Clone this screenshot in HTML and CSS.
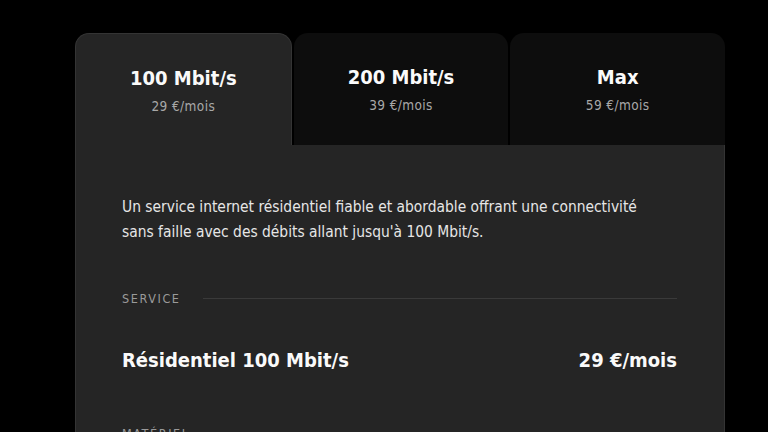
FILE: index.html
```html
<!DOCTYPE html>
<html lang="fr">
<head>
<meta charset="utf-8">
<link rel="stylesheet" href="styles.css">
</head>
<body>
<div class="wrap">
  <div class="tabs">
    <div class="tab active">
      <div class="tab-title">100 Mbit/s</div>
      <div class="tab-price">29 €/mois</div>
    </div>
    <div class="tab">
      <div class="tab-title">200 Mbit/s</div>
      <div class="tab-price">39 €/mois</div>
    </div>
    <div class="tab">
      <div class="tab-title">Max</div>
      <div class="tab-price">59 €/mois</div>
    </div>
  </div>
  <div class="panel">
    <p class="desc">Un service internet résidentiel fiable et abordable offrant une connectivité sans faille avec des débits allant jusqu'à 100 Mbit/s.</p>
    <div class="section-head"><span class="label">SERVICE</span><span class="rule"></span></div>
    <div class="row"><span>Résidentiel 100 Mbit/s</span><span>29 €/mois</span></div>
    <div class="section-head"><span class="label">MATÉRIEL</span><span class="rule"></span></div>
  </div>
</div>
</body>
</html>
```
FILE: styles.css
```css
html, body {
  margin: 0;
  padding: 0;
  background: #000;
  height: 100%;
  overflow: hidden;
}
body {
  font-family: "DejaVu Sans Condensed", "DejaVu Sans", sans-serif;
  color: #f2f2f2;
}
.wrap {
  width: 650px;
  margin: 33px 0 0 75px;
}
.tabs {
  display: flex;
  gap: 2px;
  height: 112px;
}
.tab {
  flex: 1;
  background: #0d0d0d;
  border-radius: 14px 14px 0 0;
  display: flex;
  flex-direction: column;
  align-items: center;
  padding-top: 31px;
  box-sizing: border-box;
}
.tab.active {
  background: #252525;
  border: 1px solid #343434;
  border-bottom: none;
  padding-top: 31px;
}
.tab-title {
  font-size: 20px;
  font-weight: bold;
  line-height: 26px;
  color: #fafafa;
}
.tab-price {
  font-size: 13.5px;
  letter-spacing: 0.4px;
  color: #a8a8a8;
  margin-top: 7px;
  line-height: 17px;
}
.panel {
  background: #252525;
  border: 1px solid #343434;
  border-top: none;
  padding: 50px 47px 0 46px;
  height: 400px;
  box-sizing: border-box;
}
.desc {
  margin: 0;
  font-size: 15.4px;
  line-height: 25px;
  color: #e6e6e6;
  max-width: 545px;
}
.section-head {
  display: flex;
  align-items: center;
  gap: 22px;
  margin-top: 46px;
}
.label {
  font-size: 12.5px;
  letter-spacing: 1.6px;
  color: #9a9a9a;
}
.rule {
  flex: 1;
  height: 1px;
  background: #3a3a3a;
}
.row {
  display: flex;
  justify-content: space-between;
  font-size: 20px;
  font-weight: bold;
  margin-top: 42px;
  color: #fafafa;
}
.row + .section-head {
  margin-top: 54px;
}
```
